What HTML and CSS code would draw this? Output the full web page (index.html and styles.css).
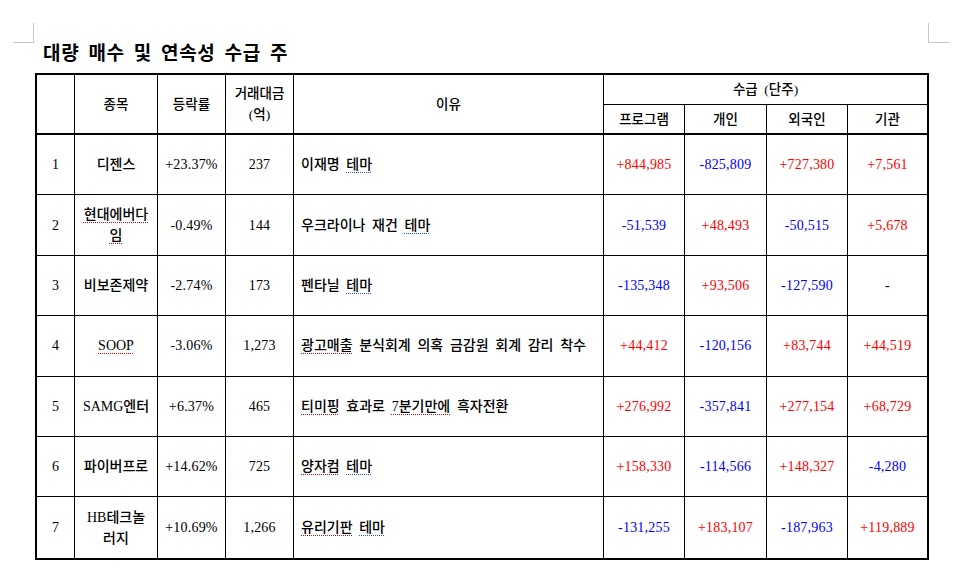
FILE: index.html
```html
<!DOCTYPE html>
<html lang="ko">
<head>
<meta charset="utf-8">
<title>대량 매수 및 연속성 수급 주</title>
<link rel="stylesheet" href="styles.css">
</head>
<body>
<div class="page">
  <span class="corner corner-tl"></span>
  <span class="corner corner-tr"></span>
  <h1 class="title">대량 매수 및 연속성 수급 주</h1>
  <table class="grid">
    <colgroup>
      <col class="c-rank"><col class="c-name"><col class="c-chg"><col class="c-amt"><col class="c-why">
      <col class="c-prog"><col class="c-ind"><col class="c-for"><col class="c-inst">
    </colgroup>
    <thead>
      <tr class="h1">
        <th rowspan="2" class="hb"></th>
        <th rowspan="2" class="hb">종목</th>
        <th rowspan="2" class="hb">등락률</th>
        <th rowspan="2" class="hb">거래대금<br>(억)</th>
        <th rowspan="2" class="hb">이유</th>
        <th colspan="4" class="last">수급 (단주)</th>
      </tr>
      <tr class="h2">
        <th class="hb">프로그램</th>
        <th class="hb">개인</th>
        <th class="hb">외국인</th>
        <th class="hb last">기관</th>
      </tr>
    </thead>
    <tbody>
      <tr>
        <td class="num">1</td><td class="name">디젠스</td><td class="num">+23.37%</td><td class="num">237</td>
        <td class="why">이재명 <span class="gr">테마</span></td>
        <td class="num up">+844,985</td><td class="num dn">-825,809</td><td class="num up">+727,380</td><td class="num up last">+7,561</td>
      </tr>
      <tr>
        <td class="num">2</td><td class="name"><span class="sp">현대에버다임</span></td><td class="num">-0.49%</td><td class="num">144</td>
        <td class="why">우크라이나 재건 <span class="gr">테마</span></td>
        <td class="num dn">-51,539</td><td class="num up">+48,493</td><td class="num dn">-50,515</td><td class="num up last">+5,678</td>
      </tr>
      <tr>
        <td class="num">3</td><td class="name">비보존제약</td><td class="num">-2.74%</td><td class="num">173</td>
        <td class="why">펜타닐 <span class="gr">테마</span></td>
        <td class="num dn">-135,348</td><td class="num up">+93,506</td><td class="num dn">-127,590</td><td class="num last">-</td>
      </tr>
      <tr>
        <td class="num">4</td><td class="name"><span class="sp">SOOP</span></td><td class="num">-3.06%</td><td class="num">1,273</td>
        <td class="why"><span class="sp">광고매출</span> 분식회계 의혹 금감원 회계 감리 착수</td>
        <td class="num up">+44,412</td><td class="num dn">-120,156</td><td class="num up">+83,744</td><td class="num up last">+44,519</td>
      </tr>
      <tr>
        <td class="num">5</td><td class="name">SAMG엔터</td><td class="num">+6.37%</td><td class="num">465</td>
        <td class="why"><span class="sp">티미핑</span> 효과로 <span class="sp">7분기만에</span> 흑자전환</td>
        <td class="num up">+276,992</td><td class="num dn">-357,841</td><td class="num up">+277,154</td><td class="num up last">+68,729</td>
      </tr>
      <tr>
        <td class="num">6</td><td class="name">파이버프로</td><td class="num">+14.62%</td><td class="num">725</td>
        <td class="why"><span class="sp">양자컴</span> <span class="gr">테마</span></td>
        <td class="num up">+158,330</td><td class="num dn">-114,566</td><td class="num up">+148,327</td><td class="num dn last">-4,280</td>
      </tr>
      <tr>
        <td class="num">7</td><td class="name">HB테크놀러지</td><td class="num">+10.69%</td><td class="num">1,266</td>
        <td class="why"><span class="sp">유리기판</span> <span class="gr">테마</span></td>
        <td class="num dn">-131,255</td><td class="num up">+183,107</td><td class="num dn">-187,963</td><td class="num up last">+119,889</td>
      </tr>
    </tbody>
  </table>
</div>
</body>
</html>
```
FILE: styles.css
```css
html, body {
  margin: 0;
  padding: 0;
  background: #ffffff;
}
body {
  font-family: "Liberation Serif", "Noto Sans CJK KR", serif;
  color: #000000;
}
.page {
  position: relative;
  width: 966px;
  height: 581px;
  padding: 40px 0 0 35px;
  box-sizing: border-box;
}
.corner {
  position: absolute;
  width: 20px;
  height: 19px;
  border-color: #c4c4c4;
  border-style: solid;
}
.corner-tl {
  left: 13px;
  top: 23px;
  border-width: 0 1px 1px 0;
}
.corner-tr {
  left: 928px;
  top: 23px;
  border-width: 0 0 1px 1px;
}
.title {
  margin: 0 0 9px 8px;
  font-family: "Noto Sans CJK KR", sans-serif;
  font-size: 19px;
  font-weight: 700;
  line-height: 24px;
  word-spacing: 3px;
  letter-spacing: 0.7px;
}
.grid {
  width: 894px;
  table-layout: fixed;
  border-collapse: separate;
  border-spacing: 0;
  border: 2px solid #000;
  font-size: 14px;
  word-spacing: 3.2px;
}
.c-rank { width: 38px; }
.c-name { width: 83px; }
.c-chg { width: 68px; }
.c-amt { width: 68px; }
.c-why { width: 310px; }
.c-prog { width: 81px; }
.c-ind { width: 82px; }
.c-for { width: 81px; }
.c-inst { width: 79px; }
.grid th,
.grid td {
  box-sizing: border-box;
  border-right: 1px solid #000;
  border-bottom: 1px solid #000;
  padding: 0 7px;
  text-align: center;
  vertical-align: middle;
  line-height: 21px;
  font-weight: 500;
}
.grid th {
  font-weight: 500;
  font-size: 13.5px;
}
.grid .last {
  border-right: 0;
}
.grid th.hb {
  border-bottom: 2px solid #000;
}
.h1 { height: 30px; }
.h2 { height: 30px; }
.grid tbody tr {
  height: 60.4px;
}
.grid tbody tr:last-child td {
  border-bottom: 0;
}
.grid td.num {
  font-size: 14px;
  letter-spacing: 0.2px;
  padding: 0 2px;
}
.grid td.why {
  text-align: left;
  padding: 0 7px;
}
.up { color: #ff0000; }
.dn { color: #0000ff; }
.sp {
  text-decoration: underline dotted #e00000;
  text-decoration-thickness: 1px;
  text-underline-offset: 3px;
}
.gr {
  text-decoration: underline dotted #2a4fe0;
  text-decoration-thickness: 1px;
  text-underline-offset: 3px;
}
```
